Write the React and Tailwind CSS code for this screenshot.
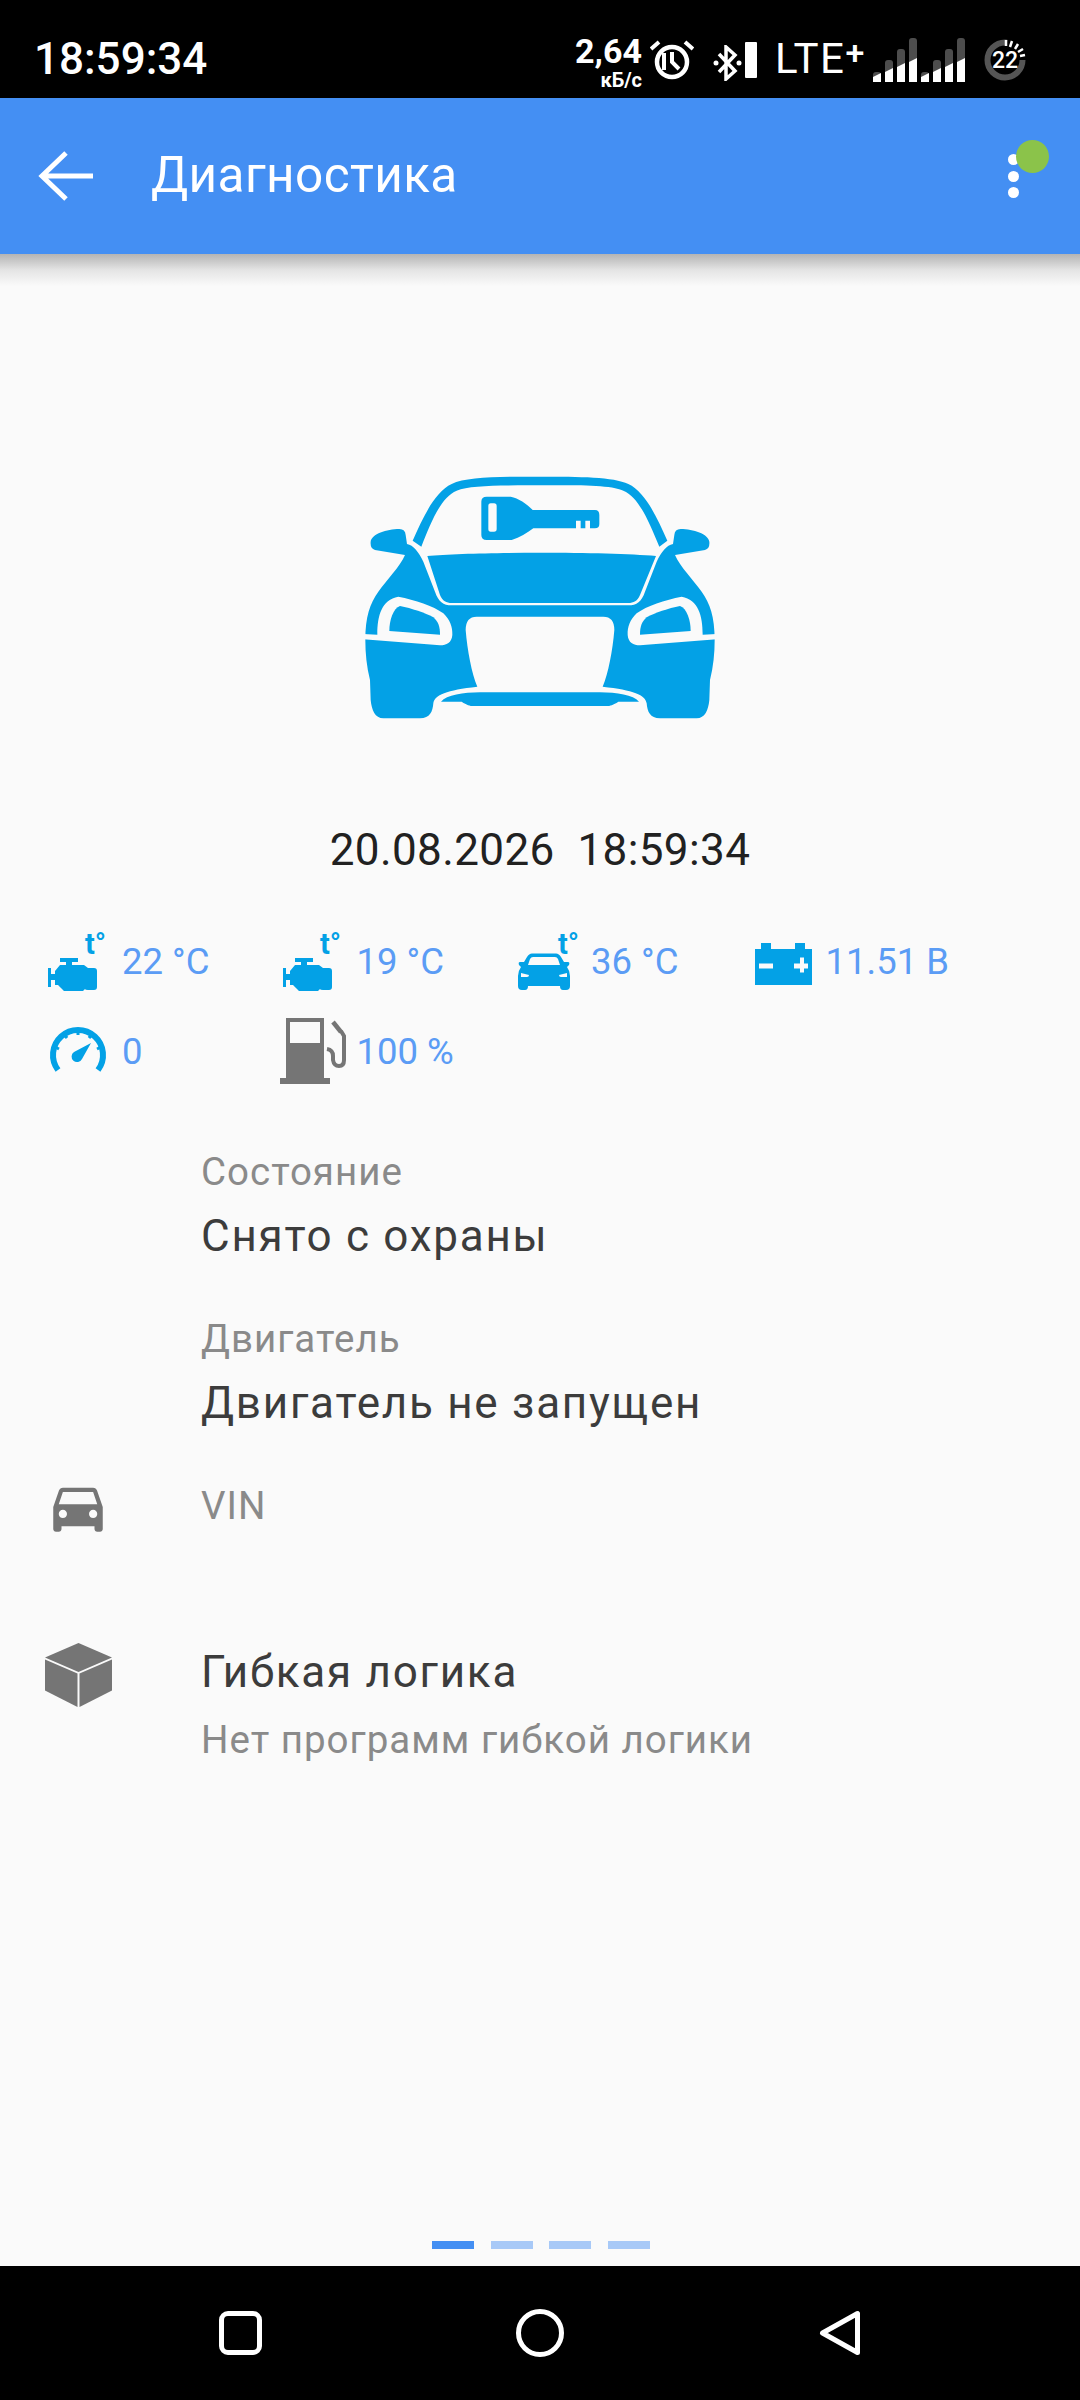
import React from 'react'

const BLUE = '#03a1e6'
const GRAY = '#757575'
const BG = '#fafafa'

function CarShape() {
  return (
    <>
      {/* roof */}
      <path fill={BLUE} d="M218 242C250 170 285 95 335 72C380 50 480 50 600 50C720 50 820 50 865 72C915 95 950 170 982 242L958 260C925 180 895 110 850 92C810 75 720 76 600 76C480 76 390 75 350 92C305 110 275 180 244 260Z" />
      {/* hood */}
      <path fill={BLUE} d="M262 288C400 275 800 275 948 288L900 405C893 423 880 429 865 429H335C320 429 307 423 300 405Z" />
      {/* body */}
      <path
        fill={BLUE}
        d="M92 245C95 222 140 207 178 207Q196 207 197 225L201 252C220 255 235 275 250 305L285 395C295 425 310 436 335 436H865C890 436 905 425 915 395L950 305C965 275 980 255 999 252L1003 225Q1004 207 1022 207C1060 207 1105 222 1108 245Q1110 265 1095 270L1005 285C1020 320 1060 360 1085 395C1110 430 1124 470 1124 540C1124 580 1120 620 1110 660L1108 720C1105 750 1095 775 1070 775H960C930 775 922 755 920 730C917 705 880 690 788 680C805 640 818 570 823 510Q823 470 790 470H410Q377 470 377 510C382 570 395 640 412 680C320 690 283 705 280 730C278 755 270 775 240 775H130C105 775 95 750 92 720L90 660C80 620 76 580 76 540C76 470 90 430 115 395C140 360 180 320 195 285L105 270Q90 265 92 245Z"
      />
      {/* headlights */}
      <path fill={BG} d="M70 522L112 524C112 465 125 420 175 410C225 420 280 437 310 460C330 480 338 500 337 525C335 548 320 556 300 556L70 538Z" />
      <path fill={BLUE} d="M148 513C148 480 160 445 180 438C215 445 255 458 280 472C295 485 300 500 300 524Z" />
      <path fill={BG} d="M1130 522L1088 524C1088 465 1075 420 1025 410C975 420 920 437 890 460C870 480 862 500 863 525C865 548 880 556 900 556L1130 538Z" />
      <path fill={BLUE} d="M1052 513C1052 480 1040 445 1020 438C985 445 945 458 920 472C905 485 900 500 900 524Z" />
      {/* lip */}
      <path fill={BLUE} d="M303 725C320 705 370 697 420 697H780C830 697 880 705 897 725H835C820 735 810 738 800 738H400C390 738 380 735 365 725Z" />
      {/* key */}
      <path
        fill={BLUE}
        fillRule="evenodd"
        d="M440 110H512C535 115 560 130 578 150H765Q778 150 778 165V192Q778 205 765 205H750V182H736V205H722V182H708V205H580C560 220 540 232 515 240H440Q424 240 424 225V125Q424 110 440 110ZM452 130Q445 130 445 138V207Q445 215 452 215H462Q470 215 470 207V138Q470 130 462 130Z"
      />
    </>
  )
}

function TempMark({ x, y }) {
  return (
    <text x={x} y={y} fill={BLUE} fontFamily="Roboto, sans-serif" fontWeight="700" fontSize="29">
      t°
    </text>
  )
}

function EngineIcon() {
  return (
    <svg width="76" height="90" viewBox="0 0 76 90" className="overflow-visible">
      <path
        fill={BLUE}
        d="M2 52H5V58H9V55L14 49H20V46H14V42H32V46H26V49H38L42 52H48Q51 52 51 55V71Q51 74 48 74H42Q39 74 39 73L37 75H18L12 69H9V64H5V71H2Z"
      />
      <TempMark x="39" y="38" />
    </svg>
  )
}

function SmallCarIcon() {
  return (
    <svg width="76" height="90" viewBox="0 0 76 90" className="overflow-visible">
      <path
        fill={BLUE}
        fillRule="evenodd"
        d="M17 37.5H41Q44 37.5 46 41L49 46H53Q55 46 54 49L52 51Q55 55 55 60V70Q55 74 51 74H48Q45 74 45 70H13Q13 74 10 74H7Q3 74 3 70V60Q3 55 6 51L4 49Q3 46 5 46H9L12 41Q14 37.5 17 37.5ZM18 41Q16 41 15 43L13 49H45L43 43Q42 41 40 41Z"
      />
      <path fill={BG} d="M6 57L14 59Q14 61 12 61H6ZM52 57L44 59Q44 61 46 61H52Z" />
      <TempMark x="43" y="38" />
    </svg>
  )
}

function BatteryIcon() {
  return (
    <svg width="76" height="90" viewBox="0 0 76 90">
      <path fill={BLUE} d="M5 33H11V27H21V33H45V27H55V33H62V69H5Z" />
      <path fill={BG} d="M9 47.5H23V52.5H9ZM44 47.5H50V41.5H54V47.5H58V52.5H54V56.5H50V52.5H44Z" />
    </svg>
  )
}

function GaugeIcon() {
  return (
    <svg width="76" height="90" viewBox="0 0 76 90">
      <path fill="none" stroke={BLUE} strokeWidth="6" d="M12 64A25 25 0 1 1 52 64" />
      <path
        stroke={BLUE}
        strokeWidth="3"
        d="M32 24V29M18 28L21 32M46 28L43 32M9 41L13 43M55 41L51 43"
      />
      <path fill={BLUE} d="M45 37L36 53A5.5 5.5 0 1 1 28 46Z" />
    </svg>
  )
}

function FuelIcon() {
  return (
    <svg width="76" height="90" viewBox="0 0 76 90" className="overflow-visible">
      <path fill={GRAY} fillRule="evenodd" d="M5 12H43V72H49V78H-1V72H5ZM9 16V37H39V16Z" />
      <path
        fill="none"
        stroke={GRAY}
        strokeWidth="4"
        d="M46 43Q52 44 52 50V54Q53 60 58 60Q63 60 63 54V30L60 25"
      />
      <path fill="none" stroke={GRAY} strokeWidth="4.5" d="M52 16L60 26" />
    </svg>
  )
}

function Reading({ icon, value }) {
  return (
    <div className="flex h-[90px] items-center">
      <div className="w-[76px] shrink-0">{icon}</div>
      <span className="mt-[2px] text-[36.5px] leading-none text-[#5b9cf5]">{value}</span>
    </div>
  )
}

function SignalGroup({ x }) {
  const lefts = [0, 12, 24, 36]
  const tops = [34, 22, 11, 0]
  return (
    <g transform={`translate(${x} 0)`}>
      {lefts.map((left, i) => (
        <g key={i}>
          <rect x={left} y={tops[i]} width="8" height={44 - tops[i]} rx="3" fill="#4d4d4d" />
          <path d={`M${left} 44V${39 - i * 5}L${left + 8} ${35 - i * 5}V44Z`} fill="#fff" />
        </g>
      ))}
    </g>
  )
}

function StatusBar() {
  return (
    <div className="flex h-[98px] shrink-0 items-start bg-black text-white">
      <span className="mt-[34px] ml-[34px] text-[44px] leading-[50px] font-medium">18:59:34</span>
      <div className="mt-[38px] mr-[54px] ml-auto flex items-start">
        <div className="mt-[-4px] flex w-[65px] flex-col items-end">
          <span className="text-[34px] leading-[34px] font-bold">2,64</span>
          <span className="mt-[2px] text-[20px] leading-[20px] font-bold">кБ/с</span>
        </div>
        <svg width="44" height="42" viewBox="0 0 44 42" className="mt-[2px] ml-[8px]">
          <circle cx="22" cy="22" r="15" fill="none" stroke="#fff" strokeWidth="4.5" />
          <path d="M1 9L9 2M43 9L35 2" stroke="#fff" strokeWidth="4" />
          <path d="M14 13V30M22 12V22L29 29" fill="none" stroke="#fff" strokeWidth="4" />
        </svg>
        <svg width="30" height="36" viewBox="0 0 30 36" className="mt-[7px] ml-[19px]">
          <path d="M6 9L22 26L13 34V2L22 10L6 27" fill="none" stroke="#fff" strokeWidth="3.5" />
          <circle cx="3" cy="18" r="2.5" fill="#fff" />
          <circle cx="26" cy="18" r="2.5" fill="#fff" />
        </svg>
        <div className="mt-[4px] ml-[2px] h-[36px] w-[12px] rounded-[1px] bg-white" />
        <div className="ml-[18px] flex w-[94px] items-start">
          <span className="mt-[-3px] text-[42px] leading-[48px] tracking-[1.5px]">LTE</span>
          <span className="mt-[-6px] text-[34px] leading-[40px] font-medium">+</span>
        </div>
        <svg width="92" height="44" viewBox="0 0 92 44" className="ml-[4px]">
          <SignalGroup x="0" />
          <SignalGroup x="48" />
        </svg>
        <svg width="42" height="42" viewBox="0 0 42 42" className="mt-[1px] ml-[19px]">
          <circle cx="21" cy="21" r="17.5" fill="none" stroke="#555" strokeWidth="6" strokeDasharray="84 26" />
          <path d="M22 1V7M28 2L26 8M34 5L31 10M39 10L34 13M41 16L36 17" stroke="#fff" strokeWidth="2.5" />
          <text x="21" y="29" textAnchor="middle" fontSize="23" fontWeight="500" fill="#fff" fontFamily="Roboto, sans-serif">
            22
          </text>
        </svg>
      </div>
    </div>
  )
}

function AppBar() {
  return (
    <div className="relative z-10 flex h-[156px] shrink-0 items-center bg-[#448ff3] text-white">
      <svg width="56" height="50" viewBox="0 0 56 50" className="ml-[38px]">
        <path d="M55 25H4M28 2L4 25L28 48" fill="none" stroke="#fff" strokeWidth="5" />
      </svg>
      <span className="ml-[57px] text-[49.5px] leading-none tracking-[0.4px]">Диагностика</span>
      <div className="mr-[61px] ml-auto flex flex-col gap-[5.5px]">
        <div className="h-[11px] w-[11px] rounded-full bg-white" />
        <div className="h-[11px] w-[11px] rounded-full bg-white" />
        <div className="h-[11px] w-[11px] rounded-full bg-white" />
      </div>
      <div className="absolute top-[42px] left-[1016px] h-[33px] w-[33px] rounded-full bg-[#8bc34a]" />
      {/* elevation shadow */}
      <div className="absolute top-full left-0 h-[32px] w-full bg-gradient-to-b from-[#b4b4b4] via-[#e4e4e4] to-[#fafafa]" />
    </div>
  )
}

function NavBar() {
  return (
    <div className="flex h-[134px] shrink-0 items-center justify-center bg-black">
      <div className="flex w-[300px] justify-center">
        <div className="h-[44px] w-[43px] rounded-[9px] border-[5px] border-white" />
      </div>
      <div className="flex w-[300px] justify-center">
        <div className="h-[48px] w-[48px] rounded-full border-[5px] border-white" />
      </div>
      <div className="flex w-[300px] justify-center">
        <svg width="42" height="46" viewBox="0 0 42 46">
          <path d="M38.5 3.5V42.5L3.5 23Z" fill="none" stroke="#fff" strokeWidth="5" strokeLinejoin="round" />
        </svg>
      </div>
    </div>
  )
}

export default function App() {
  const readings = [
    { icon: <EngineIcon />, value: '22 °C' },
    { icon: <EngineIcon />, value: '19 °C' },
    { icon: <SmallCarIcon />, value: '36 °C' },
    { icon: <BatteryIcon />, value: '11.51 В' },
    { icon: <GaugeIcon />, value: '0' },
    { icon: <FuelIcon />, value: '100 %' },
  ]

  return (
    <div className="flex h-[2400px] w-[1080px] flex-col overflow-hidden bg-[#fafafa] font-['Roboto',sans-serif]">
      <StatusBar />
      <AppBar />

      <main className="flex flex-1 flex-col">
        <div className="flex justify-center pt-[206px]">
          <svg width="400" height="280" viewBox="0 0 1200 840">
            <CarShape />
          </svg>
        </div>

        <div className="mt-[82px] text-center text-[44px] leading-[56px] tracking-[0.4px] whitespace-pre text-[#212121]">
          20.08.2026  18:59:34
        </div>

        <div className="mt-[38px] ml-[46px] grid grid-cols-[repeat(4,234.5px)]">
          {readings.map((r, i) => (
            <Reading key={i} icon={r.icon} value={r.value} />
          ))}
        </div>

        <div className="pl-[201px]">
          <div className="mt-[51px] text-[38.5px] leading-[50px] tracking-[1px] text-[#8a8a8a]">Состояние</div>
          <div className="mt-[11px] text-[44px] leading-[56px] tracking-[1.75px] text-[#3c3c3c]">Снято с охраны</div>
          <div className="mt-[50px] text-[38.5px] leading-[50px] tracking-[1px] text-[#8a8a8a]">Двигатель</div>
          <div className="mt-[11px] text-[44px] leading-[56px] tracking-[1.75px] text-[#3c3c3c]">Двигатель не запущен</div>
        </div>

        <div className="mt-[43px] flex h-[72px]">
          <div className="w-[201px] shrink-0 pl-[45px]">
            <svg width="66" height="66" viewBox="0 0 24 24" fill={GRAY}>
              <path d="M18.92 6.01C18.72 5.42 18.16 5 17.5 5h-11c-.66 0-1.21.42-1.42 1.01L3 12v8c0 .55.45 1 1 1h1c.55 0 1-.45 1-1v-1h12v1c0 .55.45 1 1 1h1c.55 0 1-.45 1-1v-8l-2.08-5.99zM6.5 16c-.83 0-1.5-.67-1.5-1.5S5.67 13 6.5 13s1.5.67 1.5 1.5S7.33 16 6.5 16zm11 0c-.83 0-1.5-.67-1.5-1.5s.67-1.5 1.5-1.5 1.5.67 1.5 1.5-.67 1.5-1.5 1.5zM5 11l1.5-4.5h11L19 11H5z" />
            </svg>
          </div>
          <div className="mt-[7px] text-[38.5px] leading-[50px] tracking-[1px] text-[#8a8a8a]">VIN</div>
        </div>

        <div className="mt-[97px] flex">
          <div className="w-[201px] shrink-0 pl-[45px]">
            <svg width="67" height="64" viewBox="0 0 67 64" fill={GRAY}>
              <path d="M33.5 0L67 14.5L33.5 29L0 14.5Z" />
              <path d="M0 16.5L32.5 30.5V64L0 47.5Z" />
              <path d="M67 16.5L34.5 30.5V64L67 47.5Z" />
            </svg>
          </div>
          <div>
            <div className="mt-[1px] text-[44px] leading-[56px] tracking-[1.75px] text-[#3c3c3c]">Гибкая логика</div>
            <div className="mt-[15px] text-[38.5px] leading-[50px] tracking-[1px] text-[#8a8a8a]">Нет программ гибкой логики</div>
          </div>
        </div>

        <div className="mt-auto mb-[17px] ml-[2px] flex justify-center gap-[16.5px]">
          <div className="h-[8px] w-[42px] bg-[#448ff3]" />
          <div className="h-[8px] w-[42px] bg-[#a8c9f7]" />
          <div className="h-[8px] w-[42px] bg-[#a8c9f7]" />
          <div className="h-[8px] w-[42px] bg-[#a8c9f7]" />
        </div>
      </main>

      <NavBar />
    </div>
  )
}
